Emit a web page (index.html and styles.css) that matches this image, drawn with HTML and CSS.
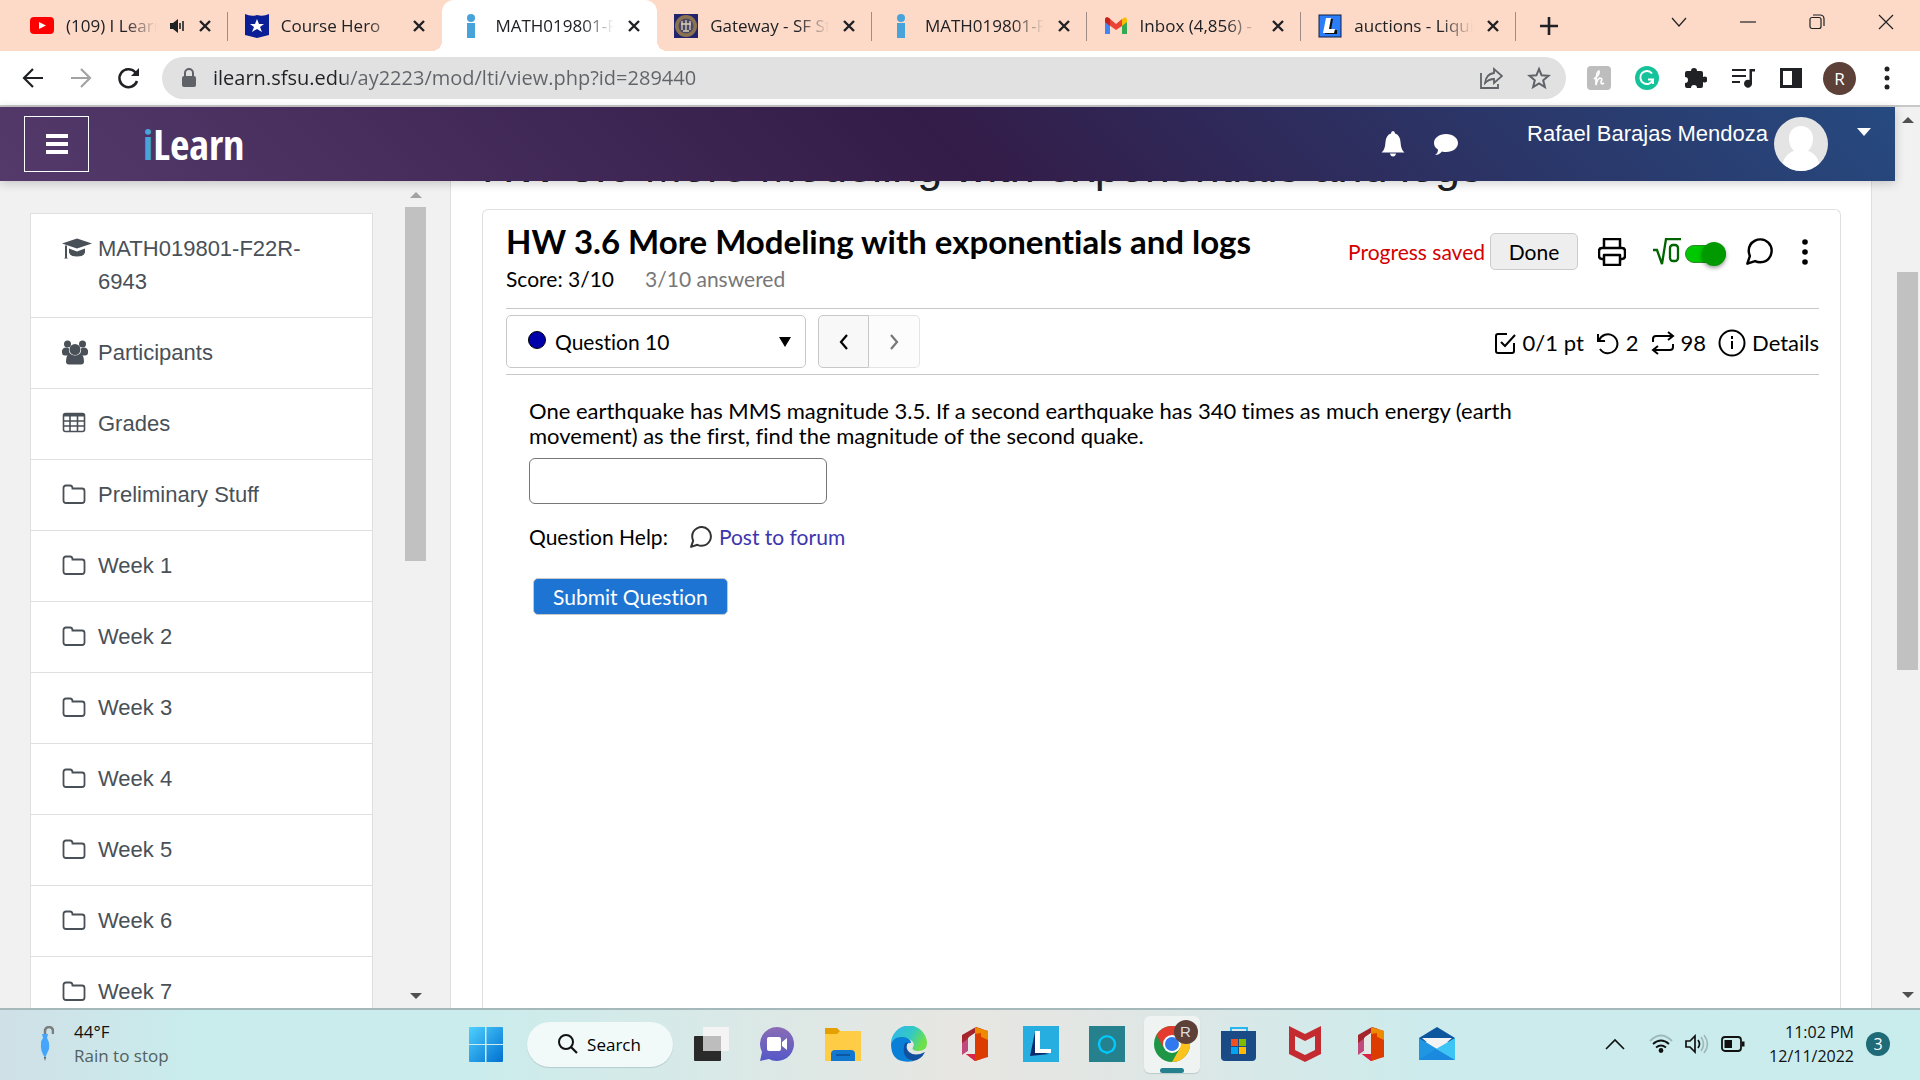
FILE: index.html
```html
<!DOCTYPE html>
<html lang="en">
<head>
<meta charset="utf-8">
<meta name="viewport" content="width=device-width, initial-scale=1">
<title>MATH019801-F22R-6943: HW 3.6</title>
<link rel="stylesheet" href="styles.css">
</head>
<body>
<svg class="defs" aria-hidden="true">
  <symbol id="x" viewBox="0 0 16 16"><path d="M3 3l10 10M13 3L3 13" fill="none" stroke="#202124" stroke-width="2.4"/></symbol>
  <symbol id="info-i" viewBox="0 0 24 24"><circle cx="12" cy="4" r="4" fill="#47a3da"/><path d="M8 9h8v15H8z" fill="#47a3da"/></symbol>
  <symbol id="folder" viewBox="0 0 24 22"><path d="M1.5 17V4.500q0-2.500 2.500-2.500h4q2.500 0 2.500 3h9.500q2.500 0 2.500 2.500V17q0 2.500-2.500 2.500H4q-2.500 0-2.500-2.500z" fill="none" stroke="#495057" stroke-width="1.8"/></symbol>
  <symbol id="chat" viewBox="2 2 20 20"><path d="M21 11.500a8.400 8.400 0 0 1-.9 3.800 8.500 8.500 0 0 1-7.600 4.700 8.400 8.400 0 0 1-3.800-.9L3 21l1.900-5.700a8.400 8.400 0 0 1-.9-3.800 8.500 8.500 0 0 1 4.700-7.600 8.400 8.400 0 0 1 3.800-.9h.5a8.480 8.480 0 0 1 8 8z" fill="none" stroke="currentColor" stroke-width="1.800" stroke-linejoin="round"/></symbol>
  <symbol id="office" viewBox="0 0 36 36"><path d="M5 9L19 1l6 2v6l-7-2-6 4v13l-7 4z" fill="#a4262c"/><path d="M5 17l7-5v12l-7 5z" fill="#c04a7c"/><path d="M18 1l13 4v26l-13 4z" fill="#dc3c00"/><path d="M18 1l13 4v9L18 8z" fill="#ee8a00"/><path d="M18 8v20H9l9 7 6-2V7z" fill="#dc3c00"/><path d="M11 12l7-5v21h-7z" fill="#e4e8e6"/><path d="M9 28h9v7z" fill="#d8234a"/></symbol>
</svg>

<header class="browser">
  <div class="tabstrip">
    <div class="tabs" role="tablist">
      <div class="tab" role="tab">
        <svg class="fav" viewBox="0 0 24 24"><rect y="3" width="24" height="17" rx="4" fill="#f00"/><path d="M9 8l7 3.500L9 15z" fill="#fff"/></svg>
        <span class="tab-title">(109) I Learn</span>
        <svg class="audio" viewBox="0 0 16 16"><path d="M1 5h3l5-4v14l-5-4H1z" fill="#202124"/><path d="M11 5v6M14 3v10" stroke="#202124" stroke-width="1.600"/></svg>
        <button class="close" aria-label="Close tab"><svg><use href="#x"/></svg></button>
      </div>
      <div class="tab" role="tab">
        <svg class="fav" viewBox="0 0 24 24"><path d="M0 0q6 3 12 1 6 2 12-1v21l-12 3-12-3z" fill="#0a1e96"/><path d="M12 5l2 5h5l-4 3 2 5-5-3-5 3 2-5-4-3h5z" fill="#fff"/></svg>
        <span class="tab-title">Course Hero</span>
        <button class="close" aria-label="Close tab"><svg><use href="#x"/></svg></button>
      </div>
      <div class="tab active" role="tab" aria-selected="true">
        <svg class="fav"><use href="#info-i"/></svg>
        <span class="tab-title">MATH019801-F22R</span>
        <button class="close" aria-label="Close tab"><svg><use href="#x"/></svg></button>
      </div>
      <div class="tab" role="tab">
        <svg class="fav" viewBox="0 0 24 24"><rect width="24" height="24" fill="#22246e"/><circle cx="12" cy="12" r="11" fill="#8b7350"/><circle cx="12" cy="12" r="7.500" fill="#4c4766"/><path d="M8 7v9M12 6v11M16 7v9M7 10h10M9 17h6" stroke="#d8cfb4" stroke-width="1.300"/></svg>
        <span class="tab-title">Gateway - SF State</span>
        <button class="close" aria-label="Close tab"><svg><use href="#x"/></svg></button>
      </div>
      <div class="tab" role="tab">
        <svg class="fav"><use href="#info-i"/></svg>
        <span class="tab-title">MATH019801-F22R</span>
        <button class="close" aria-label="Close tab"><svg><use href="#x"/></svg></button>
      </div>
      <div class="tab" role="tab">
        <svg class="fav" viewBox="0 0 24 24"><path d="M1 6v14h5V10z" fill="#4285f4"/><path d="M23 6v14h-5V10z" fill="#34a853"/><path d="M1 6q0-4 4-2l7 6v6L1 8z" fill="#ea4335"/><path d="M1 8V6q0-4 4-2l1 1v7z" fill="#c5221f"/><path d="M12 10l6-5v7l-6 4z" fill="#ea4335"/><path d="M18 5q5-4 5 1v2l-5 4z" fill="#fbbc04"/></svg>
        <span class="tab-title">Inbox (4,856) - raf</span>
        <button class="close" aria-label="Close tab"><svg><use href="#x"/></svg></button>
      </div>
      <div class="tab" role="tab">
        <svg class="fav" viewBox="0 0 24 24"><rect x="1" y="1" width="22" height="22" fill="#2c7dfa" stroke="#102040"/><path d="M10 5h5l-2 11h6v4H7z" fill="#111"/><path d="M8 4h5l-2 11h6l-1 4H5z" fill="#fff"/></svg>
        <span class="tab-title">auctions - Liquid</span>
        <button class="close" aria-label="Close tab"><svg><use href="#x"/></svg></button>
      </div>
    </div>
    <button class="new-tab" aria-label="New tab"><svg viewBox="0 0 18 18"><path d="M9 0v18M0 9h18" stroke="#202124" stroke-width="2.600"/></svg></button>
    <div class="window-controls">
      <button aria-label="Search tabs"><svg viewBox="0 0 16 16"><path d="M1 4l7 8 7-8" class="thin"/></svg></button>
      <button aria-label="Minimize"><svg viewBox="0 0 16 16"><path d="M0 8h16" class="thin"/></svg></button>
      <button aria-label="Restore"><svg viewBox="0 0 16 16"><rect x="1" y="3.500" width="11" height="11" rx="2" class="thin"/><path d="M4 1h7q4 0 4 4v7" class="thin"/></svg></button>
      <button aria-label="Close"><svg viewBox="0 0 16 16"><path d="M1 1l14 14M15 1L1 15" class="thin"/></svg></button>
    </div>
  </div>
  <div class="toolbar">
    <nav class="tools">
      <button aria-label="Back"><svg viewBox="0 0 24 24"><path d="M22 12H4M12 3l-9 9 9 9" fill="none" stroke="#202124" stroke-width="2.200"/></svg></button>
      <button aria-label="Forward"><svg viewBox="0 0 24 24"><path d="M2 12h18M12 3l9 9-9 9" fill="none" stroke="#a3a3a3" stroke-width="2.200"/></svg></button>
      <button aria-label="Reload"><svg viewBox="0 0 24 24"><path d="M20 15a9 9 0 1 1-2-9l2 2" fill="none" stroke="#202124" stroke-width="2.500"/><path d="M22 2v8h-8z" fill="#202124"/></svg></button>
    </nav>
    <div class="omnibox">
      <svg class="lock" viewBox="0 0 16 20"><path d="M4 9V5a4 4 0 0 1 8 0v4" fill="none" stroke="#5f6368" stroke-width="2"/><rect x="1" y="8" width="14" height="11" rx="2" fill="#5f6368"/></svg>
      <input class="url" type="text" aria-label="Address" value="ilearn.sfsu.edu/ay2223/mod/lti/view.php?id=289440">
      <div class="tools">
        <button aria-label="Share"><svg viewBox="0 0 24 24"><path d="M2 7v15h17v-4" fill="none" stroke="#5f6368" stroke-width="1.800"/><path d="M6 17q1-9 9-10V3l8 7-8 7v-4q-5 0-9 4z" fill="none" stroke="#5f6368" stroke-width="1.800"/></svg></button>
        <button aria-label="Bookmark"><svg viewBox="0 0 24 24"><path d="M12 3l2.600 6.300 6.900.5-5.300 4.500 1.700 6.700-5.900-3.600L6.100 21l1.700-6.700L2.500 9.800l6.900-.5z" fill="none" stroke="#5f6368" stroke-width="2"/></svg></button>
      </div>
    </div>
    <div class="tools">
      <button aria-label="Honey"><svg viewBox="0 0 24 24"><rect width="24" height="24" rx="4" fill="#bdbdbd"/><path d="M7 13q6-4 5-8-3 0-3 14 1-6 4-7 3 0 1 4 0 3 3 1" fill="none" stroke="#fff" stroke-width="1.700"/></svg></button>
      <button aria-label="Grammarly"><svg viewBox="0 0 24 24"><circle cx="12" cy="12" r="12" fill="#15c39a"/><path d="M17 7.500a6.500 6.500 0 1 0 1 6h-5M18 13v5" fill="none" stroke="#fff" stroke-width="1.900"/></svg></button>
      <button aria-label="Extensions"><svg viewBox="0 0 24 24"><path d="M20 11V7q0-2-2-2h-4a3 3 0 1 0-6 0H4Q2 5 2 7v4a3 3 0 1 1 0 6v3q0 2 2 2h4a3 3 0 1 1 6 0h4q2 0 2-2v-4a3 3 0 1 0 0-5z" fill="#202124"/></svg></button>
      <button aria-label="Media"><svg viewBox="0 0 24 24"><path d="M1 4h14M1 10h14M1 16h8" stroke="#202124" stroke-width="2.200"/><path d="M24 3v2.500h-3V18a4 4 0 1 1-2.500-4V3z" fill="#202124"/></svg></button>
      <button aria-label="Side panel"><svg viewBox="0 0 24 24"><path d="M1 2h22v20H1zM4 5v14h9V5z" fill="#202124" fill-rule="evenodd"/></svg></button>
      <button class="profile" aria-label="Profile">R</button>
      <button aria-label="Menu"><svg viewBox="0 0 24 24" fill="#202124"><circle cx="12" cy="3" r="2.500"/><circle cx="12" cy="12" r="2.500"/><circle cx="12" cy="21" r="2.500"/></svg></button>
    </div>
  </div>
</header>

<div class="page">
  <div class="doc">
    <header class="site">
      <button class="burger" aria-label="Side panel"><svg viewBox="0 0 22 22"><path d="M0 1h22v4H0zM0 9h22v4H0zM0 17h22v4H0z" fill="#fff"/></svg></button>
      <a class="logo" href="#"><span>i</span>Learn</a>
      <div class="site-tools">
        <button aria-label="Notifications"><svg viewBox="0 0 24 26"><path d="M12 0q2 0 2 2.500 5 1.500 5.500 8.500.5 8 4 10.500H.5Q4 19 4.500 11 5 4 10 2.500 10 0 12 0zM9 22.500h6q-.5 3-3 3t-3-3z" fill="#fff"/></svg></button>
        <button aria-label="Messages"><svg viewBox="0 0 26 26"><path d="M13 3c7 0 12 4 12 9s-5 9-12 9q-2 0-4-.5-3 3.500-7 3.500 3-2 3-5.500-4-2.500-4-6.500c0-5 5-9 12-9z" fill="#fff"/></svg></button>
      </div>
      <a class="user" href="#">Rafael Barajas Mendoza</a>
      <svg class="avatar" viewBox="0 0 54 54"><defs><clipPath id="round"><circle cx="27" cy="27" r="27"/></clipPath></defs><g clip-path="url(#round)"><rect width="54" height="54" fill="#e4e4e4"/><path d="M27 9c7 0 12 5 12 12 0 6-2 10-5 13 6 2 11 6 13 20H7c2-14 7-18 13-20-3-3-5-7-5-13 0-7 5-12 12-12z" fill="#fff"/></g></svg>
      <button class="user-menu" aria-label="User menu"><svg viewBox="0 0 14 8"><path d="M0 0h14L7 8z" fill="#fff"/></svg></button>
    </header>

    <div class="columns">
      <aside class="drawer">
        <nav class="course-nav">
          <a href="#"><svg viewBox="0 0 30 22"><path d="M0 6L15 1l15 5-15 5z" fill="#495057"/><path d="M7 11l8 3 8-3v4q-1 4-8 4t-8-4z" fill="#495057"/><path d="M3 8v12l-1 1h4l-1-1V8" fill="#495057"/></svg><span>MATH019801-F22R-6943</span></a>
          <a href="#"><svg viewBox="0 0 30 26" fill="#495057"><circle cx="5.500" cy="4.500" r="3.500"/><circle cx="20.500" cy="4.500" r="3.500"/><circle cx="13" cy="10" r="5.500"/><path d="M0 13V11q1-3 4-3 2 0 3 1-.5 4 2 6-2 0-3 1H3q-3 0-3-3zM26 13V11q-1-3-4-3-2 0-3 1 .5 4-2 6 2 0 3 1h3q3 0 3-3z"/><path d="M4 22q0-7 4-8 2 2 5 2t5-2q4 1 4 8 0 3-3 3H7q-3 0-3-3z"/></svg><span>Participants</span></a>
          <a href="#"><svg viewBox="0 0 30 22"><path d="M1.500 4v13q0 2 2 2h17q2 0 2-2V3q0-2-2-2h-17q-2 0-2 2zM8 3v16M15.500 3v16M2 8.500h20M2 13.500h20" fill="none" stroke="#495057" stroke-width="1.600"/><path d="M2 1h20v3H2z" fill="#495057"/></svg><span>Grades</span></a>
          <a href="#"><svg viewBox="0 0 30 22"><use href="#folder" width="24" height="22"/></svg><span>Preliminary Stuff</span></a>
          <a href="#"><svg viewBox="0 0 30 22"><use href="#folder" width="24" height="22"/></svg><span>Week 1</span></a>
          <a href="#"><svg viewBox="0 0 30 22"><use href="#folder" width="24" height="22"/></svg><span>Week 2</span></a>
          <a href="#"><svg viewBox="0 0 30 22"><use href="#folder" width="24" height="22"/></svg><span>Week 3</span></a>
          <a href="#"><svg viewBox="0 0 30 22"><use href="#folder" width="24" height="22"/></svg><span>Week 4</span></a>
          <a href="#"><svg viewBox="0 0 30 22"><use href="#folder" width="24" height="22"/></svg><span>Week 5</span></a>
          <a href="#"><svg viewBox="0 0 30 22"><use href="#folder" width="24" height="22"/></svg><span>Week 6</span></a>
          <a href="#"><svg viewBox="0 0 30 22"><use href="#folder" width="24" height="22"/></svg><span>Week 7</span></a>
        </nav>
        <div class="scrollbar drawer-bar"><i class="up dim"></i><div class="track"><div class="thumb"></div></div><i class="down"></i></div>
      </aside>

      <main>
        <h1>HW 3.6 More Modeling with exponentials and logs</h1>
        <section class="card">
          <div class="card-head">
            <div>
              <h2>HW 3.6 More Modeling with exponentials and logs</h2>
              <p class="score"><span>Score: 3/10</span><span class="muted">3/10 answered</span></p>
            </div>
            <div class="head-tools">
              <span class="saved">Progress saved</span>
              <button class="done">Done</button>
              <button class="icon print" aria-label="Print"><svg viewBox="0 0 28 28" fill="none" stroke="#000" stroke-width="2.500" stroke-linejoin="round"><path d="M6 10V1h16v9M6 21H4q-3 0-3-3v-5q0-3 3-3h20q3 0 3 3v5q0 3-3 3h-2"/><path d="M6 17h16v10H6z"/></svg></button>
              <label class="math"><svg viewBox="0 0 28 28" fill="none" stroke="#006400" stroke-width="2.300"><path d="M0 12h4l5 14 4-25h15"/><rect x="17" y="7" width="8" height="16" rx="3"/></svg><input type="checkbox" checked aria-label="Math editor"></label>
              <button class="icon talk" aria-label="Forum"><svg><use href="#chat"/></svg></button>
              <button class="icon" aria-label="More"><svg viewBox="0 0 28 28"><circle cx="14" cy="4" r="2.800"/><circle cx="14" cy="14" r="2.800"/><circle cx="14" cy="24" r="2.800"/></svg></button>
            </div>
          </div>
          <div class="question-bar">
            <div class="picker">
              <i class="dot"></i>
              <select aria-label="Question"><option>Question 10</option></select>
              <svg viewBox="0 0 12 10"><path d="M0 0h12L6 10z"/></svg>
            </div>
            <div class="pager">
              <button aria-label="Previous question"><svg viewBox="0 0 10 16"><path d="M8 1L2 8l6 7" fill="none" stroke="#000" stroke-width="2.200"/></svg></button>
              <button aria-label="Next question" disabled><svg viewBox="0 0 10 16"><path d="M2 1l6 7-6 7" fill="none" stroke="#777" stroke-width="2.200"/></svg></button>
            </div>
            <div class="facts">
              <span><svg viewBox="0 0 24 24"><path d="M14 3H5q-2 0-2 2v15q0 2 2 2h14q2 0 2-2v-8M8 11l4 4L22 4"/></svg>0/1 pt</span>
              <span><svg viewBox="0 0 24 24"><path d="M2 3v7h7M3 9.500a9.500 9.500 0 1 1 1 8.500"/></svg>2</span>
              <span><svg viewBox="0 0 24 24"><path d="M17 1l5 4-5 4M2 11V8q0-3 3-3h17M7 23l-5-4 5-4M22 13v3q0 3-3 3H2"/></svg>98</span>
              <a href="#"><svg class="info" viewBox="0 0 28 28"><circle cx="14" cy="14" r="12.500"/><path d="M14 12v8M14 7v3"/></svg>Details</a>
            </div>
          </div>
          <div class="question">
            <label for="answer">One earthquake has MMS magnitude 3.5. If a second earthquake has 340 times as much energy (earth movement) as the first, find the magnitude of the second quake.</label>
            <input id="answer" type="text">
            <p class="help"><span>Question Help:</span><a href="#"><svg><use href="#chat"/></svg>Post to forum</a></p>
            <button class="submit">Submit Question</button>
          </div>
        </section>
      </main>
    </div>
  </div>
  <div class="scrollbar page-bar"><i class="up"></i><div class="track"><div class="thumb"></div></div><i class="down"></i></div>
</div>

<footer class="taskbar">
  <div class="weather">
    <svg viewBox="0 0 14 36"><path d="M5 9V4q1-3 4-3t4 3v4" fill="none" stroke="#7d7d7d" stroke-width="2.500"/><path d="M2 8h6l-1 4q3 5 2 11l-4 9q-5-8-4-14 0-4 2-6z" fill="#45a5fa"/><path d="M4 31h2l-1 4z" fill="#555"/></svg>
    <p><span class="temp">44°F</span><span>Rain to stop</span></p>
  </div>
  <div class="apps">
    <button aria-label="Start"><svg viewBox="0 0 36 36"><defs><linearGradient id="win" x1="0" y1="0" x2="1" y2="1"><stop stop-color="#4fd0ff"/><stop offset="1" stop-color="#0070d0"/></linearGradient></defs><path d="M1 2q0-1 1-1h15v17H1zM18.500 1H34q1 0 1 1v16H18.500zM1 19h16v17H2q-1 0-1-1zM18.500 19H35v16q0 1-1 1H18.500z" fill="url(#win)"/></svg></button>
    <button class="search"><svg viewBox="0 0 20 20"><circle cx="8" cy="8" r="7" fill="none" stroke="#111" stroke-width="2"/><path d="M13 13l6 6" stroke="#111" stroke-width="2.200"/></svg>Search</button>
    <button aria-label="Task view"><svg viewBox="0 0 36 36"><rect x="1" y="10" width="27" height="25" rx="1" fill="#2a2a2a"/><rect x="10" y="1" width="26" height="24" rx="1" fill="#f4f4f4"/><path d="M10 10h18v15H10z" fill="#bdbdbd"/></svg></button>
    <button aria-label="Chat"><svg viewBox="0 0 36 36"><defs><linearGradient id="teams" x1="0" y1="0" x2="0" y2="1"><stop stop-color="#8a6cb4"/><stop offset="1" stop-color="#5558c8"/></linearGradient></defs><path d="M18 1a17 17 0 1 1-8 32l-9 2 2-9A17 17 0 0 1 18 1z" fill="url(#teams)"/><rect x="8" y="11" width="14" height="14" rx="2" fill="#fff"/><path d="M23 16l5-4v12l-5-4z" fill="#fff"/></svg></button>
    <button aria-label="File Explorer"><svg viewBox="0 0 36 36"><path d="M0 2h12l3 3h20v6H0z" fill="#e3a000"/><path d="M0 8h12l3-3h21v30H0z" fill="#ffcd45"/><path d="M6 35V28q0-4 4-4h16q4 0 4 4v7z" fill="#1277cf"/><path d="M11 29h14" stroke="#0a4d94" stroke-width="1.500"/></svg></button>
    <button aria-label="Edge"><svg viewBox="0 0 36 36"><defs><linearGradient id="edge" x1="0" y1="0" x2="1" y2=".4"><stop stop-color="#2fb4f0"/><stop offset=".6" stop-color="#33c9c4"/><stop offset="1" stop-color="#6ee04a"/></linearGradient></defs><path d="M0 18A18 18 0 0 1 36 17q0 8-9 8-7 0-5-4 2-3-1-6-4-4-10-2Q3 15 0 18z" fill="url(#edge)"/><path d="M0 18q3-8 12-7 8 1 8 6-8 0-6 9 2 8 9 9-23 4-23-17z" fill="#0a7fd8"/><path d="M14 17q-5 14 8 18 8-1 12-9-10 5-16 0-4-4-1-10z" fill="#11509c"/></svg></button>
    <button aria-label="Office"><svg><use href="#office"/></svg></button>
    <button aria-label="L"><svg viewBox="0 0 36 36"><path d="M0 0h36v36H0z" fill="#27aee0"/><path d="M12 6l-5 24 19-2-12-3z" fill="#0b2b6e"/><path d="M12 5h5v18h11v4H12z" fill="#fff"/></svg></button>
    <button aria-label="Alexa"><svg viewBox="0 0 36 36"><path d="M0 0h36v36H0z" fill="#26818f"/><path d="M16 26a8 8 0 1 1 4 0l-2 1z" fill="none" stroke="#00caff" stroke-width="2.200"/></svg></button>
    <button class="running" aria-label="Chrome"><svg viewBox="0 0 36 36"><circle cx="18" cy="18" r="18" fill="#1e9646"/><path d="M2.400 9A18 18 0 0 1 33.600 9H18l-8 13z" fill="#e33b2e"/><path d="M33.600 9A18 18 0 0 1 18 36l8-14-2-13z" fill="#fcc31e"/><circle cx="18" cy="18" r="9" fill="#fff"/><circle cx="18" cy="18" r="7" fill="#3079ee"/></svg><b>R</b></button>
    <button aria-label="Store"><svg viewBox="0 0 36 36"><path d="M10 6V2h16v4" fill="none" stroke="#28b5f0" stroke-width="2"/><path d="M0 5h35v26q0 4-4 4H4q-4 0-4-4z" fill="#1b4b86"/><path d="M10 13h7v7h-7z" fill="#f25022"/><path d="M18 13h7v7h-7z" fill="#7fba00"/><path d="M10 21h7v7h-7z" fill="#00a4ef"/><path d="M18 21h7v7h-7z" fill="#ffb900"/></svg></button>
    <button aria-label="McAfee"><svg viewBox="0 0 36 36"><path d="M2 0l16 8 16-8v28l-16 8-16-8zM8 10v14l10 5 10-5V10l-10 5z" fill="#c32b30" fill-rule="evenodd"/></svg></button>
    <button aria-label="Office hub"><svg><use href="#office"/></svg></button>
    <button aria-label="Mail"><svg viewBox="0 0 36 36"><path d="M0 12L18 1l18 11v4H0z" fill="#0c559f"/><path d="M3 12h30L18 25z" fill="#f3f3f3"/><path d="M0 12l36 22H0z" fill="#1e96e2"/><path d="M36 12v22L17 23z" fill="#3cc4f4"/><path d="M0 34l17-11 19 11z" fill="#1b8ade"/></svg></button>
  </div>
  <div class="tray">
    <svg class="more" viewBox="0 0 20 12"><path d="M1 11l9-9 9 9" fill="none" stroke="#111" stroke-width="1.600"/></svg>
    <svg viewBox="0 0 24 20" fill="none" stroke="#111" stroke-width="1.800"><path d="M1 7q11-11 22 0" stroke="#9fb9b9"/><path d="M4 10q8-7 16 0M7 13.500q5-4 10 0"/><circle cx="12" cy="16.500" r="1.500" fill="#111"/></svg>
    <svg viewBox="0 0 24 20" fill="none" stroke="#111" stroke-width="1.700"><path d="M1 7h4l5-5v16l-5-5H1zM13 6q3 4 0 8"/><path d="M16 3q5 7 0 14M19 1q7 9 0 18" stroke="#9fb9b9"/></svg>
    <svg viewBox="0 0 24 20"><rect x="1" y="3" width="19" height="14" rx="3" fill="none" stroke="#111" stroke-width="1.800"/><path d="M3.500 6h7.500v8H3.500zM21 7.500h2.500v5H21z" fill="#111"/></svg>
    <p class="clock"><span>11:02 PM</span><span>12/11/2022</span></p>
    <span class="badge">3</span>
  </div>
</footer>
</body>
</html>
```
FILE: styles.css
```css
* { box-sizing: border-box; }

html, body { height: 100%; }

body {
  margin: 0;
  display: flex;
  flex-direction: column;
  overflow: hidden;
  background: #fff;
  color: #000;
  font-family: "Open Sans", "Noto Sans", sans-serif;
}

button {
  display: flex;
  align-items: center;
  justify-content: center;
  padding: 0;
  border: 0;
  background: none;
  font: inherit;
  color: inherit;
}

h1, h2, p { margin: 0; }
a { color: inherit; text-decoration: none; }
svg { display: block; flex: none; }
.defs { position: absolute; width: 0; height: 0; }

/* Browser frame */
.browser { flex: none; border-bottom: 2px solid #c8c8c8; }

.tabstrip {
  display: flex;
  align-items: center;
  height: 51px;
  background: #fddac8;
}
.tabs {
  display: flex;
  flex: 0 1 1516px;
  min-width: 0;
  height: 51px;
  padding-left: 13px;
}
.tab {
  position: relative;
  display: flex;
  flex: 1 1 0;
  min-width: 0;
  align-items: center;
  gap: 12px;
  padding: 0 15px 0 17px;
  font-size: 17px;
  color: #202124;
}
.tab::after {
  content: "";
  position: absolute;
  right: 0;
  top: 12px;
  width: 1px;
  height: 29px;
  background: #a08c84;
}
.tab:has(+ .active)::after { display: none; }
.tab.active { background: #fff; border-radius: 12px 12px 0 0; }
.tab.active::before, .tab.active::after {
  content: "";
  position: absolute;
  top: auto;
  bottom: 0;
  width: 10px;
  height: 10px;
}
.tab.active::before { left: -10px; background: radial-gradient(circle at 0 0, transparent 10px, #fff 10px); }
.tab.active::after { right: -10px; background: radial-gradient(circle at 100% 0, transparent 10px, #fff 10px); }
.fav { width: 24px; height: 24px; }
.audio { width: 16px; height: 16px; }
.tab-title {
  flex: 1;
  min-width: 0;
  overflow: hidden;
  white-space: nowrap;
  -webkit-mask-image: linear-gradient(to right, #000 calc(100% - 32px), transparent);
  mask-image: linear-gradient(to right, #000 calc(100% - 32px), transparent);
}
.close svg { width: 16px; height: 16px; }
.new-tab { margin-left: 24px; }
.new-tab svg { width: 18px; height: 18px; }
.window-controls { display: flex; align-self: flex-start; margin-left: auto; }
.window-controls button { width: 69px; height: 44px; }
.window-controls svg { width: 16px; height: 16px; }
.thin { fill: none; stroke: #202124; stroke-width: 1.2; }

.toolbar {
  display: flex;
  align-items: center;
  height: 54px;
  padding: 0 15px;
  gap: 15px;
}
.tools { display: flex; align-items: center; gap: 12px; }
.tools button { width: 36px; height: 36px; }
.tools svg { width: 24px; height: 24px; }
.omnibox {
  display: flex;
  flex: 1;
  align-items: center;
  gap: 16px;
  height: 42px;
  padding: 0 9px 0 19px;
  border-radius: 21px;
  background: #e1e1e1;
}
.lock { width: 16px; height: 20px; }
.url {
  flex: 1;
  min-width: 0;
  padding: 0;
  border: 0;
  outline: 0;
  font: 20px/28px "Open Sans", "Noto Sans", sans-serif;
  color: transparent;
  background: linear-gradient(to right, #202124 133px, #5f6368 133px);
  -webkit-background-clip: text;
  background-clip: text;
}
.tools .profile {
  width: 33px;
  height: 33px;
  margin: 0 1px 0 2px;
  border-radius: 50%;
  background: #5d4037;
  color: #fff;
  font-size: 17px;
}

/* Page and scrollbars */
.page { display: flex; flex: 1; min-height: 0; }
.doc { display: flex; flex: 1; min-width: 0; flex-direction: column; }

.scrollbar {
  display: flex;
  flex: none;
  flex-direction: column;
  align-items: center;
  background: #f1f1f1;
}
.scrollbar i {
  flex: none;
  border: 6px solid transparent;
}
.scrollbar .up { border-top: 0; border-bottom: 6px solid #505050; }
.scrollbar .up.dim { border-bottom-color: #a3a3a3; }
.scrollbar .down { border-bottom: 0; border-top: 6px solid #505050; }
.track { flex: 1; width: 21px; }
.thumb { background: #c1c1c1; }
.page-bar { width: 25px; padding: 10px 0; }
.page-bar .track { margin: 9px 0; padding-top: 140px; }
.page-bar .thumb { height: 398px; }
.drawer-bar { width: 21px; padding: 11px 0 9px; }
.drawer-bar .track { margin: 9px 0; }
.drawer-bar .thumb { height: 354px; }

/* Site header */
.site {
  position: relative;
  z-index: 1;
  display: flex;
  flex: none;
  align-items: center;
  height: 74px;
  padding: 0 24px;
  background: linear-gradient(45deg, #533a6b, #341c48 50%, #2e2b5b 67%, #264a80);
  box-shadow: 0 2px 10px rgba(0, 0, 0, .2);
  color: #fff;
  font: 22px "Liberation Sans", Arial, sans-serif;
}
.burger { width: 65px; height: 56px; border: 1px solid #fff; }
.burger svg { width: 22px; height: 22px; }
.logo {
  margin-left: 54px;
  font: bold 42px/44px "Open Sans Condensed", "Open Sans", sans-serif;
}
.logo span { color: #47a3da; }
.site-tools { display: flex; gap: 27px; margin-left: auto; margin-right: 68px; }
.site-tools svg { width: 26px; height: 26px; }
.user { padding-bottom: 20px; }
.avatar { width: 54px; height: 54px; margin-left: 6px; }
.user-menu { margin-left: 29px; padding-bottom: 24px; }
.user-menu svg { width: 14px; height: 8px; }

.columns { display: flex; flex: 1; min-height: 0; padding-right: 23px; background: #f1f1f1; }

/* Course drawer */
.drawer {
  display: flex;
  flex: 0 0 450px;
  justify-content: space-between;
  padding: 0 24px 0 30px;
  overflow: hidden;
}
.course-nav {
  flex: none;
  width: 343px;
  margin-top: 32px;
  border: 1px solid #dfdfdf;
  border-bottom: 0;
  background: #fff;
}
.course-nav a {
  display: flex;
  align-items: flex-start;
  gap: 6px;
  padding: 18px 60px 19px 31px;
  border-bottom: 1px solid #dfdfdf;
  color: #495057;
  font: 22px/33px "Liberation Sans", Arial, sans-serif;
}
.course-nav svg { width: 30px; height: 33px; }

/* Activity */
main {
  display: flex;
  flex: 1;
  min-width: 0;
  flex-direction: column;
  padding: 0 30px 0 31px;
  border: solid #dfdfdf;
  border-width: 0 1px;
  background: #fff;
  overflow: hidden;
}
h1 {
  flex: none;
  margin-top: -41px;
  color: #1d2125;
  font: 45px/54px "Liberation Sans", Arial, sans-serif;
}
.card {
  flex: 1;
  margin-top: 15px;
  padding: 11px 21px 0 23px;
  border: 1px solid #dfdfdf;
  border-bottom: 0;
  border-radius: 6px 6px 0 0;
  font-family: Lato, "Open Sans", sans-serif;
  font-size: 21px;
  font-variant-ligatures: none;
}
.card-head {
  display: flex;
  justify-content: space-between;
  align-items: flex-start;
  padding-bottom: 16px;
  border-bottom: 1px solid #c8c8c8;
}
h2 { font-size: 33px; line-height: 40px; font-weight: bold; }
.score { display: flex; gap: 31px; margin-top: 5px; line-height: 26px; }
.muted { color: #777; }
.head-tools { display: flex; align-items: center; margin-top: 12px; }
.saved { color: #d40000; }
.done {
  width: 88px;
  height: 37px;
  margin-left: 5px;
  border: 1px solid #ccc;
  border-radius: 5px;
  background: #eee;
}
.icon svg { width: 28px; height: 28px; }
.print { margin-left: 20px; }
.math { display: flex; align-items: center; gap: 4px; margin-left: 27px; }
.math svg { width: 28px; height: 28px; }
.math input {
  appearance: none;
  position: relative;
  width: 41px;
  height: 18px;
  margin: 4px 0 0;
  border: 1px solid #2c8a2c;
  border-radius: 9px;
  background: #00c800;
}
.math input::after {
  content: "";
  position: absolute;
  right: -1px;
  top: -4px;
  width: 24px;
  height: 24px;
  border-radius: 50%;
  background: #090;
  box-shadow: 0 2px 4px rgba(0, 0, 0, .4);
}
.talk { margin: 0 18px 0 20px; }
.talk svg { width: 27px; height: 27px; }

.question-bar {
  display: flex;
  align-items: center;
  padding: 6px 0;
  border-bottom: 1px solid #c8c8c8;
}
.picker { position: relative; width: 300px; }
.picker select {
  appearance: none;
  display: block;
  width: 100%;
  height: 53px;
  padding: 0 40px 0 48px;
  border: 1px solid #c8c8c8;
  border-radius: 5px;
  background: #fff;
  color: #000;
  font: inherit;
}
.picker .dot {
  position: absolute;
  left: 22px;
  top: 16px;
  width: 18px;
  height: 18px;
  border: 1px solid #000;
  border-radius: 50%;
  background: #00a;
}
.picker svg { position: absolute; right: 15px; top: 22px; width: 12px; height: 10px; }
.pager { display: flex; margin-left: 12px; }
.pager button {
  width: 51px;
  height: 53px;
  border: 1px solid #c8c8c8;
  border-radius: 5px 0 0 5px;
  background: #f8f8f8;
}
.pager button:disabled { border-color: #e4e4e4; border-left: 0; border-radius: 0 5px 5px 0; background: #fcfcfc; }
.pager svg { width: 10px; height: 16px; }
.facts { display: flex; gap: 12px; margin-left: auto; padding-top: 2px; font-size: 22px; }
.facts span, .facts a { display: flex; align-items: center; gap: 6px; }
.facts svg { width: 24px; height: 24px; fill: none; stroke: #000; stroke-width: 2; }
.facts .info { width: 28px; height: 28px; }

.question {
  display: flex;
  flex-direction: column;
  align-items: flex-start;
  padding: 23px 23px 0;
}
.question label { max-width: 1040px; font-size: 22px; line-height: 25px; }
.question input {
  width: 298px;
  height: 46px;
  margin-top: 10px;
  padding: 0 12px;
  border: 1px solid #777;
  border-radius: 6px;
  font: inherit;
}
.help { display: flex; gap: 22px; margin-top: 20px; line-height: 26px; }
.help a { display: flex; align-items: center; gap: 7px; color: #3d35ae; }
.help svg { width: 22px; height: 22px; color: #333; }
.submit {
  height: 37px;
  margin: 28px 4px 0;
  padding: 0 19px;
  border: 1px solid #c8c8c8;
  border-radius: 5px;
  background: #1d74d2;
  color: #fff;
}

/* Taskbar */
.taskbar {
  display: grid;
  flex: none;
  grid-template-columns: 1fr auto 1fr;
  align-items: center;
  height: 72px;
  padding: 0 0 2px 2px;
  border-top: 2px solid #a5b9ba;
  background: linear-gradient(to right, #cfe0e7, #c9ecec 10%, #cbecec 25%, #e7e6e2 50%, #e2e6e4 57%, #cdebec 74%, #c9ecec);
  font-size: 17px;
}
.weather { display: flex; align-items: center; gap: 20px; padding-left: 38px; }
.weather svg { width: 14px; height: 36px; }
.weather p, .clock { display: flex; flex-direction: column; line-height: 24px; color: #52605f; }
.weather .temp { color: #111; }
.apps { display: flex; align-items: center; gap: 30px; }
.apps button { width: 36px; height: 36px; }
.apps svg { width: 36px; height: 36px; }
.apps .search {
  width: 146px;
  height: 45px;
  gap: 9px;
  margin: 0 -10px 0 -7px;
  border-radius: 23px;
  background: #f1f9f9;
  box-shadow: 0 1px 1px #b4cccc;
}
.apps .search svg { width: 20px; height: 20px; }
.apps .running {
  position: relative;
  width: 56px;
  height: 57px;
  margin: 0 -9px 0 -11px;
  border-radius: 6px;
  background: #eff3f2;
  box-shadow: 0 1px 1px #bccac9;
}
.running::after {
  content: "";
  position: absolute;
  left: 16px;
  bottom: 0;
  width: 24px;
  height: 5px;
  border-radius: 3px;
  background: #26818f;
}
.running b {
  position: absolute;
  right: 2px;
  top: 4px;
  width: 24px;
  border-radius: 50%;
  background: #5d4037;
  color: #ddd;
  font: 15px/24px "Liberation Sans", Arial, sans-serif;
}
.tray { display: flex; align-items: center; justify-content: flex-end; gap: 12px; padding-right: 30px; }
.tray svg { width: 24px; height: 20px; }
.tray .more { width: 20px; height: 12px; margin-right: 12px; }
.clock { margin-left: 12px; text-align: right; font-size: 16px; color: #111; }
.badge {
  width: 24px;
  border-radius: 50%;
  background: #1f6b78;
  color: #fff;
  font-size: 16px;
  line-height: 24px;
  text-align: center;
}
.tray .clock { color: #111; }
```
